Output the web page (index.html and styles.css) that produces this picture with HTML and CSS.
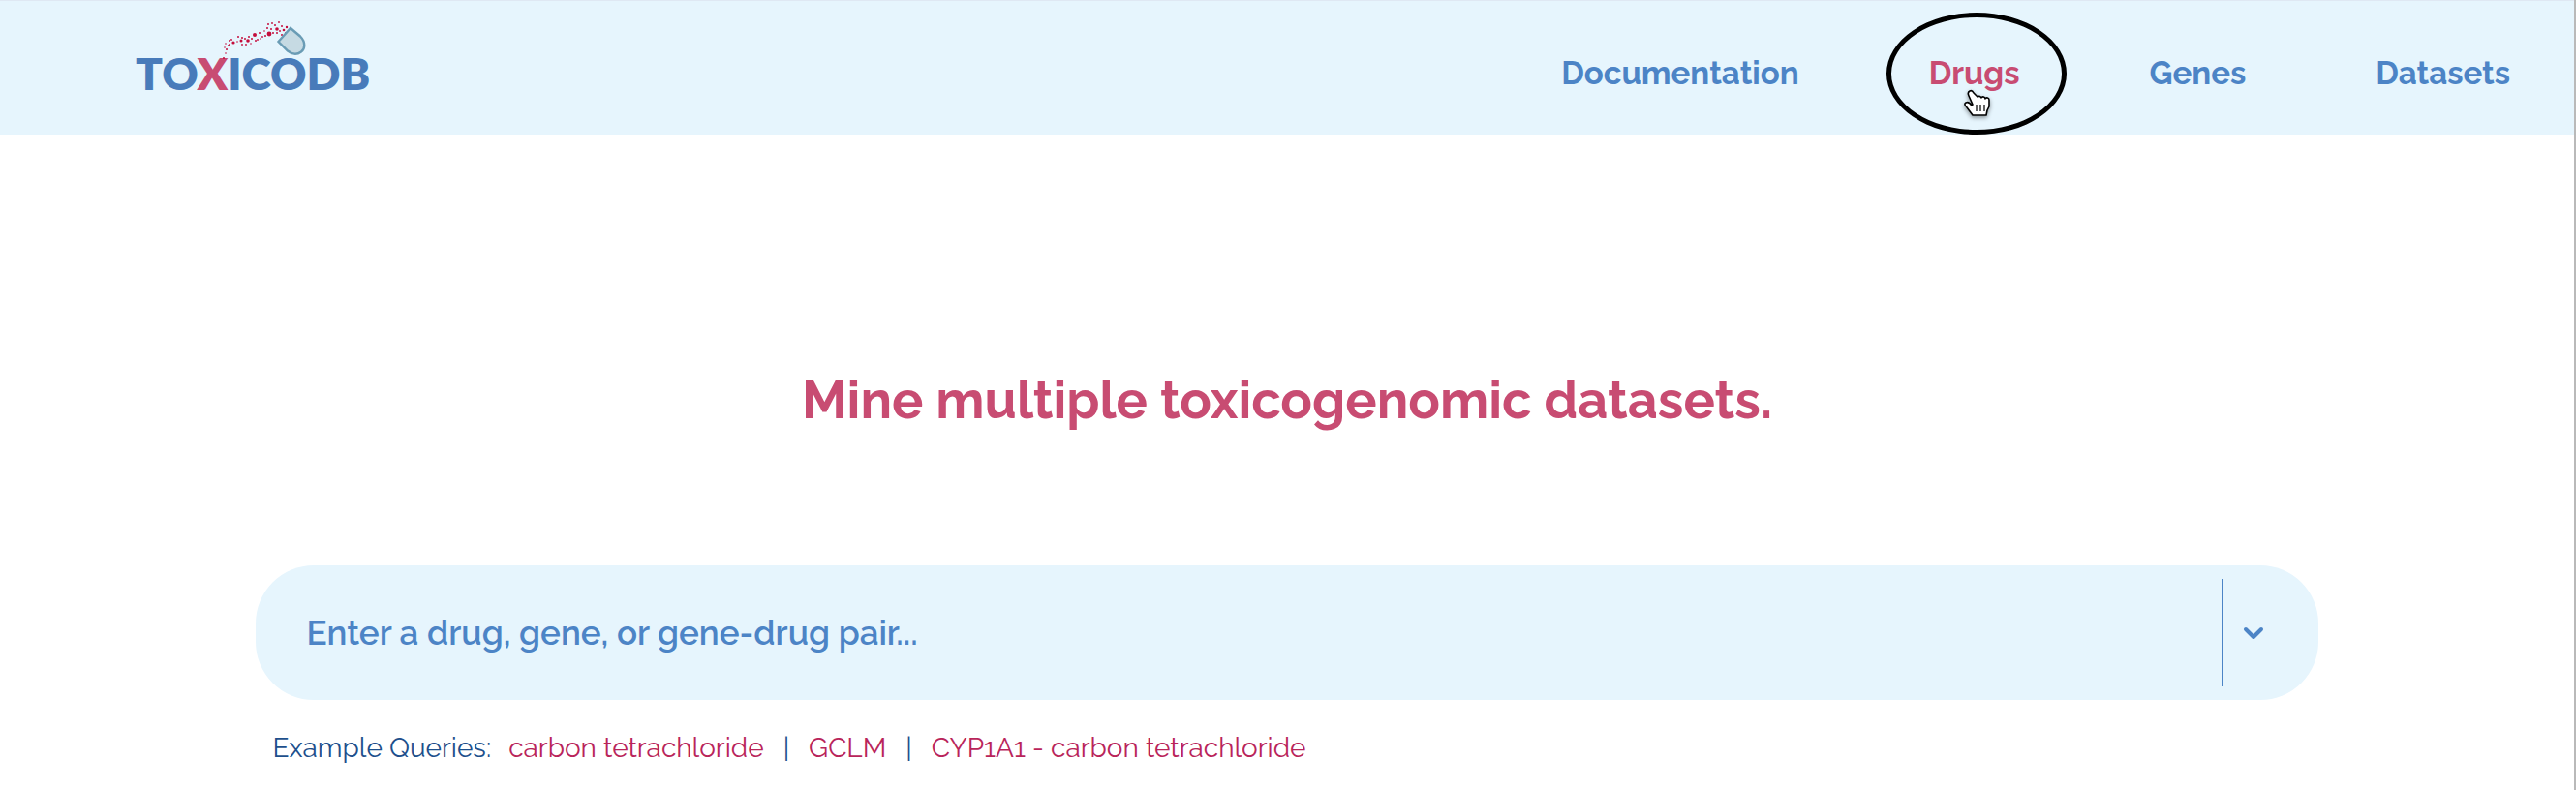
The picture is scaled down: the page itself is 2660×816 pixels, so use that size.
FILE: index.html
```html
<!DOCTYPE html>
<html lang="en">
<head>
<meta charset="utf-8">
<title>ToxicoDB</title>
<link rel="stylesheet" href="styles.css">
</head>
<body>
<header class="topbar">
  <a class="logo" href="#" aria-label="ToxicoDB home">
    <span class="logo-text">TO<span class="logo-x">X</span>ICODB</span>
    <svg class="logo-art" viewBox="0 0 88 42" aria-hidden="true">
      <g fill="#c40d3c">
        <circle cx="1" cy="38" r="1"/><circle cx="3" cy="33" r=".8"/><circle cx="4" cy="29" r="1"/><circle cx="2" cy="27" r=".8"/><circle cx="6" cy="25" r="1"/><circle cx="3" cy="23" r=".8"/><circle cx="7" cy="20" r="1"/><circle cx="9" cy="19" r=".9"/><circle cx="7" cy="24" r=".9"/><circle cx="11" cy="22" r="1.6"/><circle cx="16" cy="16" r="1"/><circle cx="15" cy="21" r=".8"/><circle cx="19" cy="20" r="1.5"/><circle cx="20" cy="17" r="1"/><circle cx="20" cy="24" r=".9"/><circle cx="23" cy="18" r="1"/><circle cx="24" cy="24" r=".9"/><circle cx="26" cy="20" r="1.8"/><circle cx="27" cy="16" r="1"/><circle cx="29" cy="23" r=".8"/><circle cx="30" cy="18" r="1"/><circle cx="33" cy="14" r="2"/><circle cx="34" cy="20" r="1"/><circle cx="36" cy="19" r=".9"/><circle cx="38" cy="12" r="1"/><circle cx="39" cy="18" r=".8"/><circle cx="41" cy="16" r=".9"/><circle cx="43" cy="10" r=".8"/><circle cx="44" cy="15" r="1"/><circle cx="46" cy="7" r="1"/><circle cx="47" cy="3" r="1"/><circle cx="48" cy="13" r="2.4"/><circle cx="50" cy="8" r="1"/><circle cx="51" cy="2" r=".9"/><circle cx="52" cy="12" r="1"/><circle cx="54" cy="4" r="1"/><circle cx="56" cy="8" r="1.8"/><circle cx="56" cy="12" r="1"/><circle cx="58" cy="1" r=".9"/><circle cx="59" cy="10" r=".9"/><circle cx="61" cy="5" r="1"/><circle cx="61" cy="14" r="1"/><circle cx="63" cy="9" r="1.3"/><circle cx="65" cy="12" r=".9"/><circle cx="66" cy="6" r="1.2"/>
      </g>
      <path d="M57.500 21 70 7l10 8.500c6 6 5 13 1 16s-9 3-14-1z" fill="#c6dae3" stroke="#6a9cb5" stroke-width="2.4"/>
    </svg>
  </a>
  <nav class="nav">
    <a href="#">Documentation</a>
    <a class="active" href="#">Drugs
      <span class="ring"></span>
      <svg class="pointer" viewBox="0 0 28 30" aria-hidden="true">
        <path d="M6 2c-2 1-2 3-1 5l4 9-1 1c-2-3-4-4-6-3s-1 3 1 5l6 8h14l1-5 2-4v-7c0-2-3-3-4-1 0-2-3-3-4-1-1-2-3-2-4-1L10 4C9 2 8 1 6 2z" fill="#fff" stroke="#000" stroke-width="1.6" stroke-linejoin="round"/>
        <path d="M13 16v7M17 16v7M21 16v7" stroke="#222" stroke-width="1.4" fill="none"/>
      </svg>
    </a>
    <a href="#">Genes</a>
    <a href="#">Datasets</a>
  </nav>
</header>
<main class="main">
  <h1 class="title">Mine multiple toxicogenomic datasets.</h1>
  <form class="search">
    <input class="field" type="text" aria-label="Search" placeholder="Enter a drug, gene, or gene-drug pair...">
    <button class="toggle" type="button" aria-label="Show options">
      <svg class="chevron" viewBox="0 0 22 14" aria-hidden="true"><path d="M3 3l8 8 8-8" fill="none" stroke="#4c84c6" stroke-width="4" stroke-linecap="round" stroke-linejoin="round"/></svg>
    </button>
  </form>
  <p class="examples">
    <span>Example Queries:</span>
    <a href="#">carbon tetrachloride</a><span class="bar">|</span><a href="#">GCLM</a><span class="bar">|</span><a href="#">CYP1A1 - carbon tetrachloride</a>
  </p>
</main>
</body>
</html>
```
FILE: styles.css
```css
* { box-sizing: border-box; }
body {
  margin: 0;
  min-height: 100vh;
  background: #fff;
  border-right: 2px solid #b9b9b9;
  font-family: Raleway, Lato, sans-serif;
  color: #1d4f8c;
}
a { text-decoration: none; }
.topbar {
  display: flex;
  align-items: center;
  justify-content: space-between;
  height: 139px;
  padding: 12px 66px 0 140px;
  background: #e6f5fd;
  border-top: 1px solid #dfe8f3;
}
.logo { position: relative; }
.logo-text {
  font-family: Lato, sans-serif;
  font-size: 46px;
  line-height: 54px;
  font-weight: 800;
  color: #487bba;
}
.logo-x { color: #c84c72; }
.logo-art {
  position: absolute;
  left: 90px;
  top: -27px;
  width: 88px;
  height: 42px;
}
.nav { display: flex; gap: 134px; }
.nav a {
  position: relative;
  font-size: 33px;
  line-height: 42px;
  font-weight: 700;
  color: #4c84c6;
}
.nav .active { color: #c84c72; }
.ring {
  position: absolute;
  left: 50%;
  top: 50%;
  width: 186px;
  height: 126px;
  margin: -63px 0 0 -91px;
  border: 5px solid #000;
  border-radius: 50%;
}
.pointer {
  position: absolute;
  left: 36px;
  top: 37px;
  width: 28px;
  height: 30px;
  filter: drop-shadow(0 2px 2px rgba(0, 0, 0, .4));
}
.main { width: 80.1%; margin: 0 auto; }
.title {
  margin: 240px 0 0;
  font-size: 54px;
  line-height: 68px;
  font-weight: 700;
  text-align: center;
  color: #c84c72;
}
.search {
  display: flex;
  align-items: center;
  height: 139px;
  margin-top: 137px;
  padding: 14px 46px 14px 52px;
  background: #e6f5fd;
  border-radius: 60px;
}
.field {
  flex: 1;
  min-width: 0;
  padding: 0;
  border: 0;
  outline: 0;
  background: none;
  font: 600 35px/44px Raleway, Lato, sans-serif;
  color: #4c84c6;
}
.field::placeholder { color: #4c84c6; opacity: 1; }
.toggle {
  display: flex;
  align-items: center;
  align-self: stretch;
  padding: 0 10px 0 20px;
  border: 0;
  border-left: 2px solid #4c84c6;
  background: none;
}
.chevron { width: 22px; height: 14px; }
.examples {
  display: flex;
  margin: 33px 0 0 17px;
  font-size: 28px;
  line-height: 34px;
}
.examples a { color: #b9245a; }
.examples span:first-child { margin-right: 18px; }
.bar { margin: 0 20px; }
```
